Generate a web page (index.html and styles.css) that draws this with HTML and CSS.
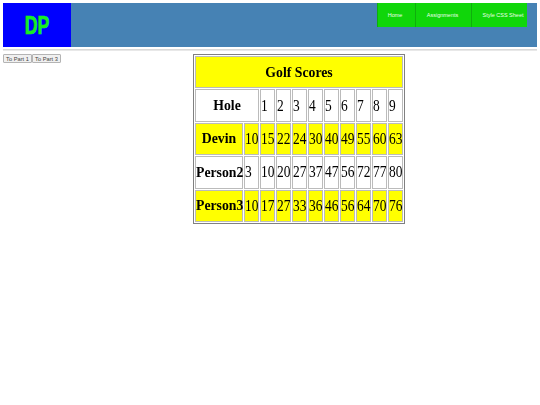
FILE: index.html
```html
<!DOCTYPE html>
<html lang="en">
<head>
<meta charset="utf-8">
<title>Golf Scores</title>
<link rel="stylesheet" href="styles.css">
</head>
<body>
<header class="banner">
  <div class="logo"><span class="logo-text">DP</span></div>
  <nav class="nav">
    <a class="nav-item nav-home">Home</a>
    <a class="nav-item nav-assign">Assignments</a>
    <a class="nav-item nav-style">Style CSS Sheet</a>
  </nav>
</header>
<hr class="rule">
<main class="content">
  <div class="parts">
    <button class="part">To Part 1</button><button class="part">To Part 3</button>
  </div>
  <table class="scores">
    <colgroup><col class="col-name"><col span="10" class="col-num"></colgroup>
    <tr class="yellow"><th colspan="11" class="title">Golf Scores</th></tr>
    <tr><th colspan="2" class="name">Hole</th><td><b>1</b></td><td><b>2</b></td><td><b>3</b></td><td><b>4</b></td><td><b>5</b></td><td><b>6</b></td><td><b>7</b></td><td><b>8</b></td><td><b>9</b></td></tr>
    <tr class="yellow"><th class="name">Devin</th><td><b>10</b></td><td><b>15</b></td><td><b>22</b></td><td><b>24</b></td><td><b>30</b></td><td><b>40</b></td><td><b>49</b></td><td><b>55</b></td><td><b>60</b></td><td><b>63</b></td></tr>
    <tr><th class="name">Person2</th><td><b>3</b></td><td><b>10</b></td><td><b>20</b></td><td><b>27</b></td><td><b>37</b></td><td><b>47</b></td><td><b>56</b></td><td><b>72</b></td><td><b>77</b></td><td><b>80</b></td></tr>
    <tr class="yellow"><th class="name">Person3</th><td><b>10</b></td><td><b>17</b></td><td><b>27</b></td><td><b>33</b></td><td><b>36</b></td><td><b>46</b></td><td><b>56</b></td><td><b>64</b></td><td><b>70</b></td><td><b>76</b></td></tr>
  </table>
</main>
</body>
</html>
```
FILE: styles.css
```css
html, body { margin: 0; padding: 0; background: #fff; }
body { padding: 3px 3px 0; font-family: "Liberation Serif", serif; color: #000; }
.banner { display: flex; justify-content: space-between; height: 44px; background: #4682b4; padding-right: 10px; }
.logo { display: flex; align-items: center; justify-content: center; width: 68px; height: 44px; background: #0000ff; }
.logo-text { display: block; color: #16ee22; -webkit-text-stroke: .7px #16ee22; font-family: "Liberation Sans", sans-serif; font-weight: bold; font-size: 26px; line-height: 1; transform: scaleX(.68); }
.nav { display: flex; height: 24px; }
.nav-item { display: flex; align-items: center; justify-content: center; box-sizing: border-box; background: #10d60a; color: #e8ffe8; font-family: "Liberation Sans", sans-serif; font-size: 5.5px; border-left: 1px solid #0fae0d; }
.nav-home { width: 38px; padding-right: 3px; }
.nav-assign { width: 56px; padding-right: 2px; }
.nav-style { width: 56px; padding-left: 7px; }
.rule { margin: 2px 0 0; height: 0; border: 0; border-top: 1px solid #d8d8d8; border-bottom: 1px solid #e8e8e8; }
.content { display: flex; align-items: flex-start; }
.parts { display: flex; width: 190px; padding-top: 3px; }
.part { box-sizing: border-box; width: 29px; height: 9px; margin: 0; padding: 0; background: #f0f0f0; border: 1px solid #b4b4b4; border-radius: 1px; font-family: "Liberation Sans", sans-serif; font-size: 5.7px; color: #444; }
.scores { margin-top: 3px; width: 212px; height: 170px; table-layout: fixed; border: 1px solid #808080; border-spacing: 1px; background: #fff; font-size: 13.75px; will-change: transform; }
.col-name { width: 48px; }
.col-num { width: 15px; }
.scores th, .scores td { box-sizing: border-box; height: 32.4px; border: 1px solid #bbb; padding: 0; white-space: nowrap; }
.scores th { text-align: center; padding-top: 1px; }
.scores td { font-size: 16px; text-align: left; overflow: visible; }
.scores td b { display: block; font-weight: normal; transform: scaleX(.84); transform-origin: left center; }
.yellow th, .yellow td { background: #ffff00; }
```
